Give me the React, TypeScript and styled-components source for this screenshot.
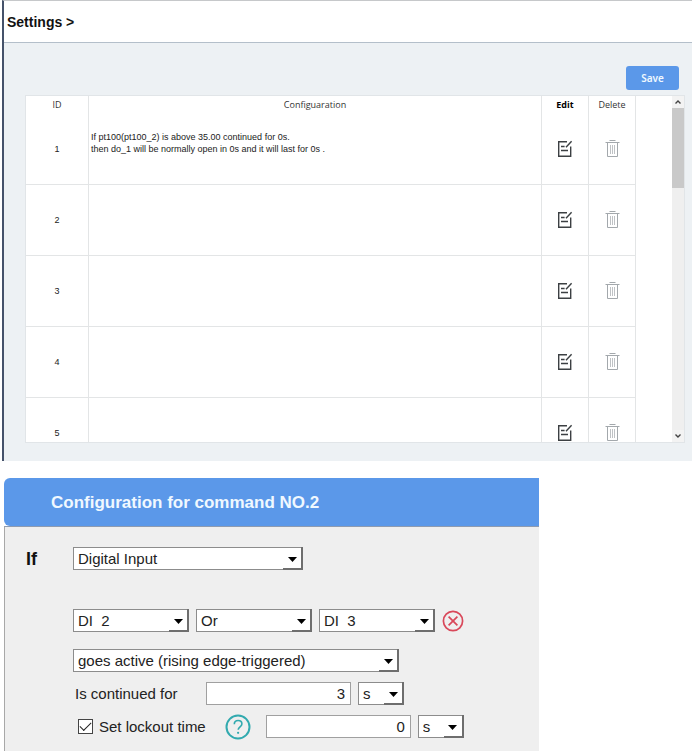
import React, { useState } from "react";
import styled, { createGlobalStyle } from "styled-components";

const GlobalStyle = createGlobalStyle`
  *, *::before, *::after { box-sizing: border-box; }
  body {
    margin: 0;
    background: #fff;
    color: #222;
    font-family: "Liberation Sans", Arial, sans-serif;
  }
`;

const Page = styled.div`
  display: flex;
  flex-direction: column;
  gap: 17px;
  padding: 0 3px 0 2px;
`;

const SettingsWindow = styled.section`
  border-left: 2px solid #45526a;
  border-top: 1px solid #c6c8ca;
  background: #edf1f4;
`;

const WindowHeader = styled.header`
  padding: 12px 3px 11px;
  border-bottom: 1px solid #b4bfca;
  background: #fff;
`;

const WindowTitle = styled.h1`
  margin: 0;
  font-size: 14px;
  line-height: 18px;
  font-weight: bold;
  color: #111;
`;

const WindowContent = styled.div`
  display: flex;
  flex-direction: column;
  gap: 5px;
  padding: 23px 7px 18px 21px;
`;

const Toolbar = styled.div`
  display: flex;
  justify-content: flex-end;
  padding-right: 6px;
`;

const SaveButton = styled.button`
  width: 53px;
  height: 24px;
  padding: 0;
  border: 0;
  border-radius: 3px;
  background: #5b98e9;
  color: #f0f8ff;
  font: 600 10px/24px "Noto Sans", "Open Sans", sans-serif;
`;

const TableFrame = styled.div`
  display: flex;
  height: 348px;
  border: 1px solid #e1e5e8;
  background: #fff;
  overflow: hidden;
`;

const TableViewport = styled.div`
  flex: 1;
  min-width: 0;
  padding-right: 36px;
  overflow: hidden;
`;

const CommandTable = styled.table`
  width: 100%;
  table-layout: fixed;
  border-collapse: separate;
  border-spacing: 0;
`;

const Column = styled.col<{ $width?: number }>`
  width: ${(p) => (p.$width ? `${p.$width}px` : "auto")};
`;

const HeadCell = styled.th<{ $strong?: boolean }>`
  height: 18px;
  padding: 0;
  border-right: 1px solid #e3e5e6;
  font: ${(p) => (p.$strong ? 700 : 400)} 9px/18px "Open Sans", "Noto Sans", sans-serif;
  color: ${(p) => (p.$strong ? "#000" : "#333")};
  text-align: center;
`;

const Cell = styled.td<{ $left?: boolean }>`
  height: 71px;
  padding: 0 2px;
  border-right: 1px solid #e3e5e6;
  border-bottom: 1px solid #e3e5e6;
  font-size: 9px;
  line-height: 12px;
  text-align: ${(p) => (p.$left ? "left" : "center")};
  vertical-align: middle;
`;

const Rule = styled.p`
  margin: 0;
  padding-bottom: 12px;
  white-space: pre-line;
`;

const IconButton = styled.button`
  display: inline-flex;
  padding: 0;
  border: 0;
  background: none;
  vertical-align: middle;
`;

const ScrollTrack = styled.div`
  display: flex;
  flex-direction: column;
  width: 12px;
  background: #efefef;
`;

const ScrollArrow = styled.button`
  display: flex;
  align-items: center;
  justify-content: center;
  height: 12px;
  padding: 0;
  border: 0;
  background: #f3f3f3;
`;

const ScrollThumb = styled.div`
  height: 80px;
  background: #c9c9c9;
`;

const ScrollSpace = styled.div`
  flex: 1;
`;

const Dialog = styled.section`
  width: 100%;
  max-width: 537px;
  padding-left: 2px;
`;

const DialogTitle = styled.h2`
  margin: 0;
  padding: 2px 47px 0;
  border-radius: 6px 0 0 6px;
  background: #5b98e9;
  color: #f0f8ff;
  font-size: 17px;
  line-height: 46px;
  font-weight: bold;
`;

const DialogBody = styled.form`
  display: flex;
  padding: 20px 20px 13px 21px;
  border-left: 1px solid #a8a8a8;
  border-top: 1px solid #8e9bb0;
  background: #efefef;
  font-size: 15px;
  line-height: 23px;
  color: #222;
`;

const Clause = styled.div`
  flex: none;
  width: 47px;
  padding-top: 1px;
  font-size: 18px;
  font-weight: bold;
  color: #111;
`;

const Fields = styled.div`
  display: flex;
  flex: 1;
  flex-direction: column;
  gap: 10px;
  min-width: 0;
`;

const FieldRow = styled.div<{ $after?: number }>`
  display: flex;
  align-items: center;
  gap: 7px;
  height: 23px;
  margin-bottom: ${(p) => p.$after ?? 0}px;
`;

const FieldLabel = styled.label`
  width: 126px;
  padding-left: 2px;
`;

const SelectBox = styled.span<{ $width: number }>`
  display: inline-grid;
  grid-template-columns: 1fr 20px;
  width: ${(p) => p.$width}px;
  height: 23px;
  flex: none;
`;

const NativeSelect = styled.select`
  grid-column: 1 / 3;
  grid-row: 1;
  width: 100%;
  height: 23px;
  padding: 1px 20px 0 4px;
  border: 1px solid #8c8c8c;
  border-radius: 0;
  appearance: none;
  background: #fff;
  color: #222;
  font: 15px/20px "Liberation Sans", Arial, sans-serif;
`;

const SelectHandle = styled.span`
  grid-column: 2;
  grid-row: 1;
  display: flex;
  align-items: center;
  justify-content: center;
  height: 23px;
  padding-top: 3px;
  border-right: 2px solid #6e6e6e;
  border-bottom: 2px solid #6e6e6e;
  pointer-events: none;
  z-index: 1;
`;

const NumberField = styled.input`
  width: 145px;
  height: 23px;
  padding: 0 5px;
  border: 1px solid #a0a0a0;
  border-radius: 0;
  background: #fff;
  color: #222;
  font: 15px/21px "Liberation Sans", Arial, sans-serif;
  text-align: right;
`;

const CheckLabel = styled.label`
  display: flex;
  align-items: center;
  gap: 6px;
  padding: 0 12px 0 5px;
  white-space: nowrap;
`;

const CheckBox = styled.input`
  display: grid;
  place-items: center;
  width: 15px;
  height: 15px;
  margin: 0;
  border: 1px solid #444;
  appearance: none;
  background: #fff;

  &:checked::before {
    content: "";
    width: 11px;
    height: 6px;
    margin-bottom: 3px;
    border-left: 1px solid #222;
    border-bottom: 1px solid #222;
    transform: rotate(-45deg);
  }
`;

const HelpButton = styled(IconButton)`
  margin-right: 8px;
`;

const EditIcon = () => (
  <svg width="16" height="18" viewBox="0 0 16 18" fill="none" stroke="#3c4043" strokeWidth="1.4">
    <path d="M10 1.7H1.7v14.6h12V6.5" />
    <path d="M4 6.5h3.6M4 10.5h7M9 7.2l5.6-6" />
  </svg>
);

const TrashIcon = () => (
  <svg width="15" height="18" viewBox="0 0 15 18" fill="none" stroke="#a3a8ac">
    <path d="M4.5.5h6M.5 2.5h14M2.5 2.5v14h10v-14" />
    <path d="M5.5 5v9M7.5 5v9M9.5 5v9" strokeWidth=".7" />
  </svg>
);

const ChevronIcon = ({ down = false }: { down?: boolean }) => (
  <svg width="6" height="4" viewBox="0 0 6 4" fill="none" stroke="#444" strokeWidth="1.4">
    <path d={down ? "M.5.5 3 3 5.5.5" : "M.5 3.5 3 1 5.5 3.5"} />
  </svg>
);

const RemoveIcon = () => (
  <svg width="22" height="22" viewBox="0 0 22 22" fill="none" stroke="#d9485a" strokeWidth="1.7">
    <circle cx="11" cy="11" r="9.6" />
    <path d="m6.6 6.6 8.8 8.8M15.4 6.6l-8.8 8.8" />
  </svg>
);

const HelpIcon = () => (
  <svg width="26" height="26" viewBox="0 0 26 26" fill="none" stroke="#32aaaf" strokeWidth="2">
    <circle cx="13" cy="13" r="11.5" />
    <path d="M9.3 10.2c0-2.3 1.5-3.7 3.8-3.7s3.8 1.3 3.8 3.4c0 2.8-3.7 3.1-3.7 5.9" strokeWidth="1.6" />
    <circle cx="13.1" cy="18.8" r="1.1" fill="#32aaaf" stroke="none" />
  </svg>
);

interface SelectProps {
  label: string;
  width: number;
  options: string[];
}

const Select = ({ label, width, options }: SelectProps) => (
  <SelectBox $width={width}>
    <NativeSelect aria-label={label}>
      {options.map((option) => (
        <option key={option}>{option}</option>
      ))}
    </NativeSelect>
    <SelectHandle>
      <svg width="9" height="5" viewBox="0 0 9 5">
        <path d="M0 0h9L4.5 5z" fill="#000" />
      </svg>
    </SelectHandle>
  </SelectBox>
);

const commands = [
  {
    id: 1,
    rule: "If pt100(pt100_2) is above 35.00 continued for 0s.\nthen do_1 will be normally open in 0s and it will last for 0s .",
  },
  { id: 2, rule: "" },
  { id: 3, rule: "" },
  { id: 4, rule: "" },
  { id: 5, rule: "" },
];

export default function App() {
  const [lockout, setLockout] = useState(true);

  return (
    <>
      <GlobalStyle />
      <Page>
        <SettingsWindow>
          <WindowHeader>
            <WindowTitle>Settings &gt;</WindowTitle>
          </WindowHeader>
          <WindowContent>
            <Toolbar>
              <SaveButton type="button">Save</SaveButton>
            </Toolbar>
            <TableFrame>
              <TableViewport>
                <CommandTable>
                  <colgroup>
                    <Column $width={63} />
                    <Column />
                    <Column $width={47} />
                    <Column $width={47} />
                  </colgroup>
                  <thead>
                    <tr>
                      <HeadCell>ID</HeadCell>
                      <HeadCell>Configuaration</HeadCell>
                      <HeadCell $strong>Edit</HeadCell>
                      <HeadCell>Delete</HeadCell>
                    </tr>
                  </thead>
                  <tbody>
                    {commands.map(({ id, rule }) => (
                      <tr key={id}>
                        <Cell>{id}</Cell>
                        <Cell $left>{rule && <Rule>{rule}</Rule>}</Cell>
                        <Cell>
                          <IconButton type="button" aria-label={`Edit command ${id}`}>
                            <EditIcon />
                          </IconButton>
                        </Cell>
                        <Cell>
                          <IconButton type="button" aria-label={`Delete command ${id}`}>
                            <TrashIcon />
                          </IconButton>
                        </Cell>
                      </tr>
                    ))}
                  </tbody>
                </CommandTable>
              </TableViewport>
              <ScrollTrack>
                <ScrollArrow type="button" aria-label="Scroll up">
                  <ChevronIcon />
                </ScrollArrow>
                <ScrollThumb />
                <ScrollSpace />
                <ScrollArrow type="button" aria-label="Scroll down">
                  <ChevronIcon down />
                </ScrollArrow>
              </ScrollTrack>
            </TableFrame>
          </WindowContent>
        </SettingsWindow>

        <Dialog>
          <DialogTitle>Configuration for command NO.2</DialogTitle>
          <DialogBody onSubmit={(e) => e.preventDefault()}>
            <Clause>If</Clause>
            <Fields>
              <FieldRow $after={29}>
                <Select label="Condition source" width={230} options={["Digital Input"]} />
              </FieldRow>
              <FieldRow $after={7}>
                <Select label="First input" width={116} options={["DI\u00a0\u00a02"]} />
                <Select label="Operator" width={116} options={["Or"]} />
                <Select label="Second input" width={116} options={["DI\u00a0\u00a03"]} />
                <IconButton type="button" aria-label="Remove input">
                  <RemoveIcon />
                </IconButton>
              </FieldRow>
              <FieldRow>
                <Select label="Trigger" width={326} options={["goes active (rising edge-triggered)"]} />
              </FieldRow>
              <FieldRow>
                <FieldLabel htmlFor="duration">Is continued for</FieldLabel>
                <NumberField id="duration" defaultValue="3" />
                <Select label="Duration unit" width={46} options={["s"]} />
              </FieldRow>
              <FieldRow>
                <CheckLabel>
                  <CheckBox type="checkbox" checked={lockout} onChange={(e) => setLockout(e.target.checked)} />
                  Set lockout time
                </CheckLabel>
                <HelpButton type="button" aria-label="Help">
                  <HelpIcon />
                </HelpButton>
                <NumberField aria-label="Lockout time" defaultValue="0" />
                <Select label="Lockout unit" width={46} options={["s"]} />
              </FieldRow>
            </Fields>
          </DialogBody>
        </Dialog>
      </Page>
    </>
  );
}
